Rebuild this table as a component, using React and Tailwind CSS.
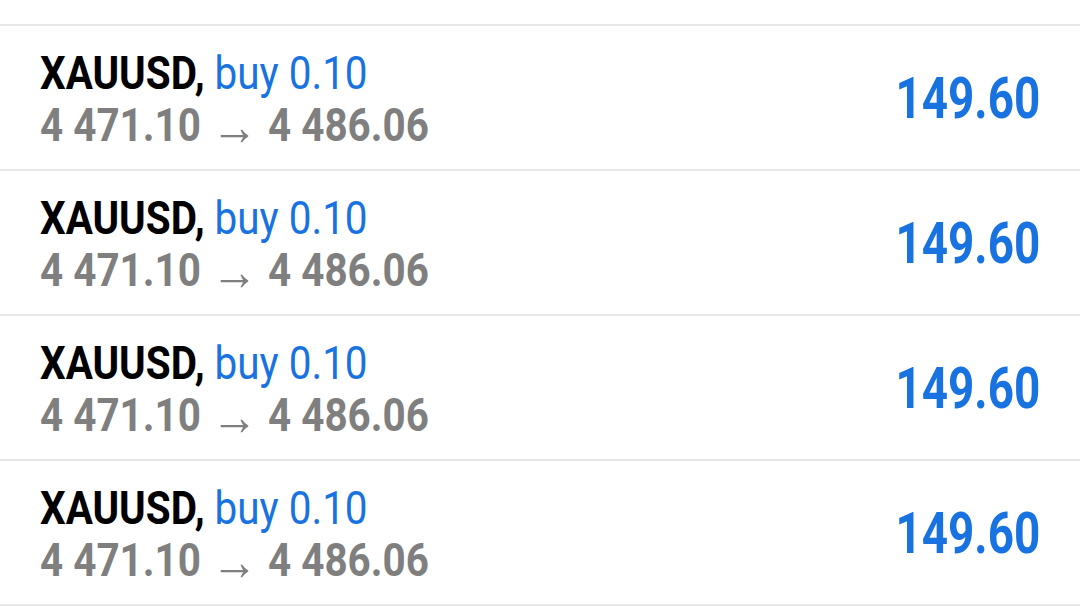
export default function App() {
  const rows = [0, 1, 2, 3];
  return (
    <div className="w-[1080px] h-[607px] bg-white overflow-hidden pt-[24px]" style={{ fontFamily: "Roboto, 'Liberation Sans', sans-serif" }}>
      {rows.map((i) => (
        <div key={i} className="h-[145px] border-t-2 border-[#e8e8e8] flex items-center justify-between pl-[40px] pr-[40px]">
          <div className="flex flex-col pt-[3px]">
            <div className="h-[52px] text-[47px] leading-[52px] whitespace-nowrap origin-left scale-x-[0.86]">
              <span className="font-bold text-black">XAUUSD,</span>
              <span className="text-[#1873e0]"> buy 0.10</span>
            </div>
            <div className="h-[52px] text-[47px] leading-[52px] whitespace-nowrap origin-left scale-x-[0.86] font-bold text-[#7f7f7f]">
              4 471.10<span className="inline-block font-medium text-[54px] leading-none mx-[12px] align-[-4px]">→</span>4 486.06
            </div>
          </div>
          <div className="text-[58px] leading-none font-bold text-[#1873e0] origin-right scale-x-[0.79] whitespace-nowrap">
            149.60
          </div>
        </div>
      ))}
      <div className="border-t-2 border-[#e8e8e8]" />
    </div>
  );
}
